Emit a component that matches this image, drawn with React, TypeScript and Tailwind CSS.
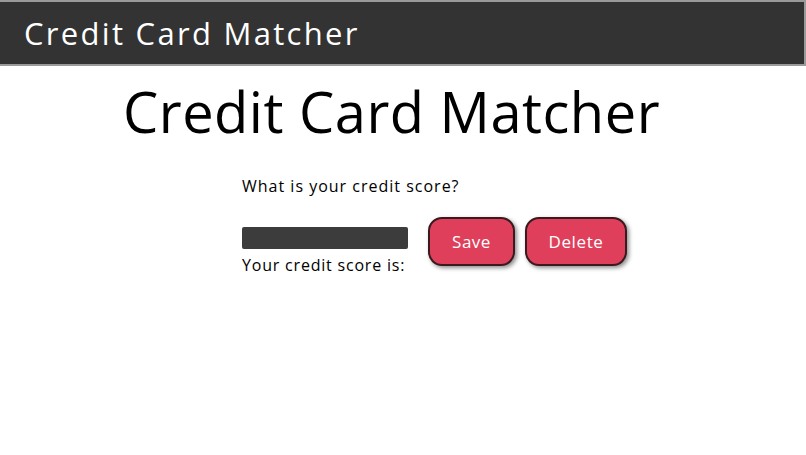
export default function App() {
  return (
    <div className="min-h-[455px] bg-white" style={{ fontFamily: '"Open Sans", "DejaVu Sans", sans-serif' }}>
      {/* Top bar */}
      <header className="h-[66px] border-t-2 border-b-2 border-r-2 border-[#9a9a9a] bg-[#333333] flex items-center pl-[24px]">
        <span className="text-white text-[31px] leading-none tracking-[2.3px]">Credit Card Matcher</span>
      </header>

      <h1 className="mt-[10px] pl-[123px] text-black text-[56px] leading-[70px] tracking-[0.5px]">Credit Card Matcher</h1>

      <div className="ml-[242px] mt-[30px]">
        <p className="text-[16px] text-black leading-[20px] tracking-[1px]">What is your credit score?</p>
        <div className="mt-[21px] flex items-start">
          <div className="w-[166px] pt-[10px]">
            <div className="h-[22px] w-[166px] rounded-[2px] bg-[#3c3c3c]" />
            <p className="mt-[6px] text-[16px] text-black leading-[20px] tracking-[0.8px] whitespace-nowrap">Your credit score is:</p>
          </div>
          <button className="ml-[20px] h-[49px] w-[87px] rounded-[14px] border-2 border-[#3a1a1f] bg-[#df3f5b] text-white text-[17px] tracking-[0.5px] shadow-[2px_2px_4px_rgba(0,0,0,0.45)]">
            Save
          </button>
          <button className="ml-[10px] h-[49px] w-[102px] rounded-[14px] border-2 border-[#3a1a1f] bg-[#df3f5b] text-white text-[17px] tracking-[0.6px] shadow-[2px_2px_4px_rgba(0,0,0,0.45)]">
            Delete
          </button>
        </div>
      </div>
    </div>
  );
}
